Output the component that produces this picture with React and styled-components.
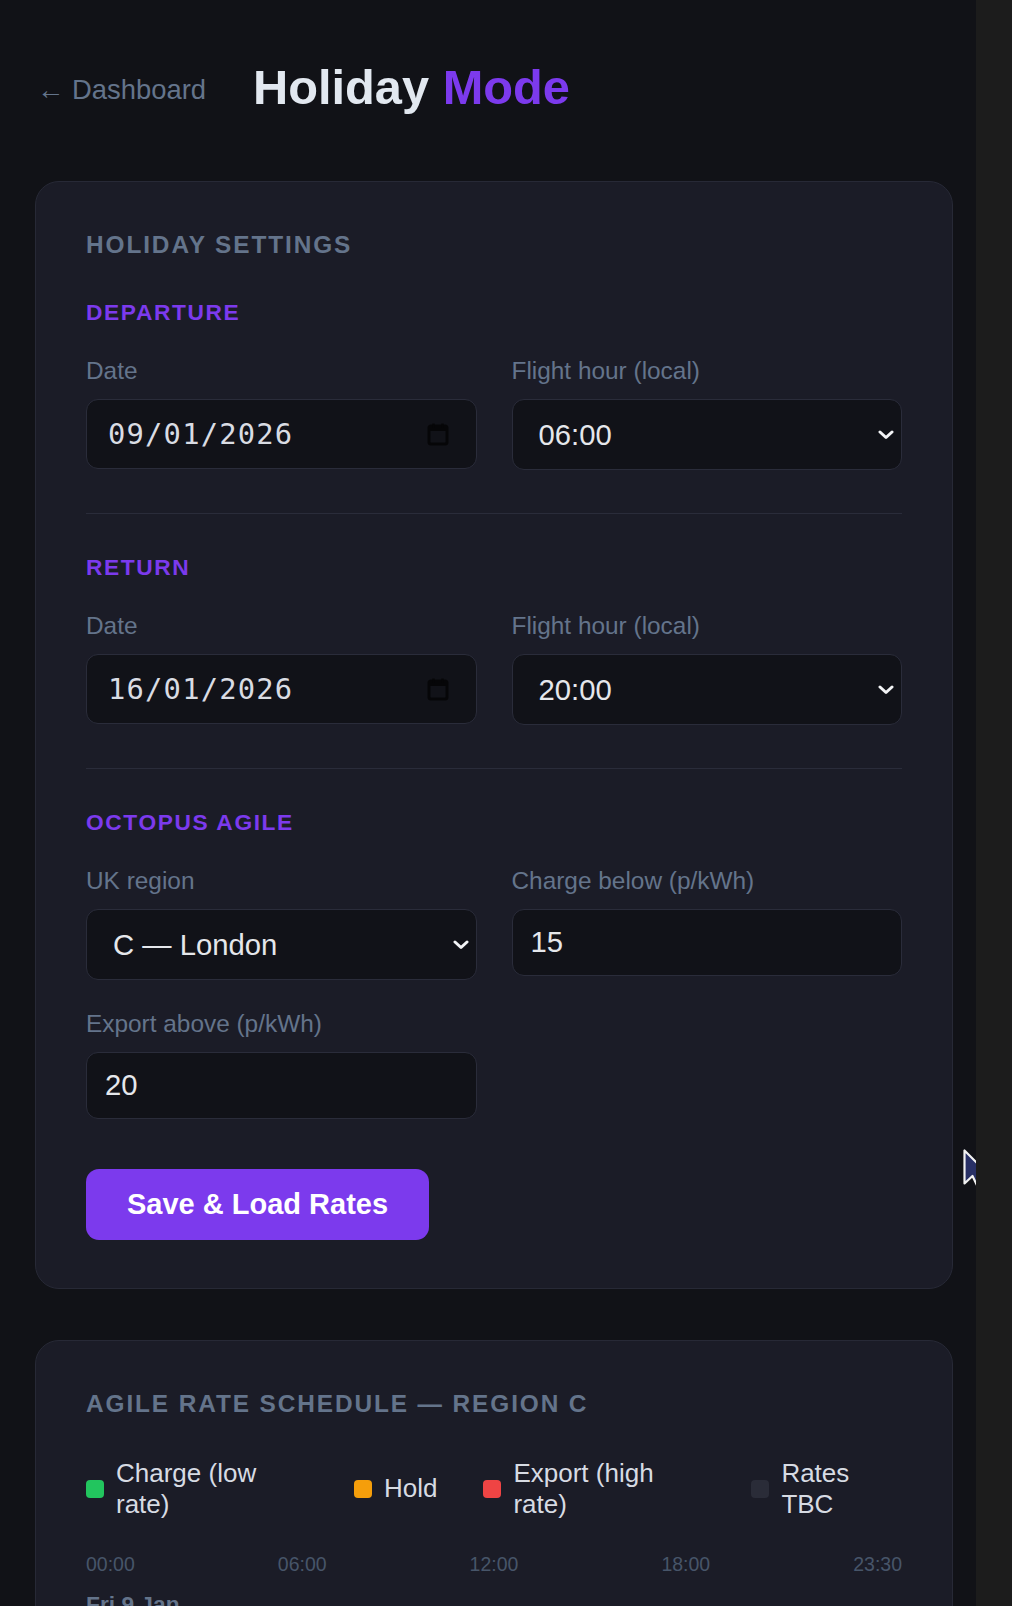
import React from 'react';
import styled, { createGlobalStyle, css } from 'styled-components';

const GlobalStyle = createGlobalStyle`
  html, body {
    margin: 0;
    padding: 0;
    background: #1c1c1c;
  }
  body {
    font-family: "Liberation Sans", Arial, sans-serif;
  }
  * {
    box-sizing: border-box;
  }
`;

const Page = styled.main`
  position: relative;
  width: 976px;
  min-height: 100vh;
  overflow: hidden;
  background: #111217;
  padding: 59px 23px 60px 35px;
`;

const Header = styled.header`
  display: flex;
  align-items: center;
  gap: 47px;
  padding-left: 2px;
  margin-bottom: 66px;
`;

const BackLink = styled.a`
  margin-top: 5px;
  color: #64748b;
  font-size: 27.4px;
  line-height: 32px;
  text-decoration: none;
`;

const Title = styled.h1`
  margin: 0;
  font-size: 48.75px;
  line-height: 56px;
  font-weight: 700;
  color: #e2e8f0;
`;

const Accent = styled.span`
  color: #7c3aed;
`;

const Card = styled.section`
  background: #1b1c27;
  border: 1px solid #272936;
  border-radius: 24px;
  padding: 49px 50px 48px;

  & + & {
    margin-top: 51px;
  }
`;

const CardTitle = styled.h2`
  margin: 0 0 40px;
  font-size: 24.4px;
  line-height: 28px;
  font-weight: 700;
  letter-spacing: 1.9px;
  text-transform: uppercase;
  color: #64748b;
`;

const GroupTitle = styled.h3`
  margin: 0 0 32px;
  font-size: 22.75px;
  line-height: 26px;
  font-weight: 700;
  letter-spacing: 1.6px;
  text-transform: uppercase;
  color: #7c3aed;
`;

const FieldGrid = styled.div`
  display: grid;
  grid-template-columns: minmax(0, 1fr) minmax(0, 1fr);
  column-gap: 35px;
  row-gap: 30px;
`;

const Field = styled.label`
  display: flex;
  flex-direction: column;
  min-width: 0;
`;

const Label = styled.span`
  font-size: 24.4px;
  line-height: 28px;
  color: #64748b;
  margin-bottom: 14px;
`;

const frame = css`
  background: #111218;
  border: 1px solid #2a2c3a;
  border-radius: 12px;
  color: #e5e7eb;
`;

const DateBox = styled.div`
  ${frame};
  display: flex;
  align-items: center;
  height: 70px;
  padding: 0 27px 0 21px;
`;

const DateText = styled.input`
  flex: 1;
  min-width: 0;
  padding: 0;
  border: none;
  outline: none;
  background: transparent;
  color: #d9dce3;
  font-family: "DejaVu Sans Mono", "Liberation Mono", monospace;
  font-size: 28.8px;
  letter-spacing: 1.2px;
`;

const SelectBox = styled.div`
  ${frame};
  display: flex;
  align-items: center;
  height: 71px;
  padding-right: 7px;
`;

const Select = styled.select`
  flex: 1;
  min-width: 0;
  height: 100%;
  appearance: none;
  padding: 0 0 0 26px;
  border: none;
  outline: none;
  background: transparent;
  color: #e5e7eb;
  font-family: "Liberation Sans", Arial, sans-serif;
  font-size: 29.25px;
`;

const NumberInput = styled.input`
  ${frame};
  width: 100%;
  height: 67px;
  padding: 0 18px;
  outline: none;
  font-family: "Liberation Sans", Arial, sans-serif;
  font-size: 29.25px;
`;

const Divider = styled.hr`
  height: 1px;
  margin: 43px 0 40px;
  border: none;
  background: #2a2c3a;
`;

const PrimaryButton = styled.button`
  display: block;
  margin-top: 50px;
  height: 71px;
  padding: 0 41px;
  border: none;
  border-radius: 13px;
  background: #7c3aed;
  color: #ffffff;
  font-family: "Liberation Sans", Arial, sans-serif;
  font-size: 29px;
  font-weight: 700;
  cursor: pointer;
`;

const Legend = styled.div`
  display: flex;
  align-items: center;
  gap: 46px;
  font-size: 26px;
  line-height: 1.18;
  color: #d7dbe3;
`;

const LegendItem = styled.div`
  display: flex;
  align-items: center;
  gap: 12px;
`;

const Swatch = styled.span`
  flex-shrink: 0;
  width: 18px;
  height: 18px;
  border-radius: 4px;
  background: ${(p) => p.$color};
`;

const AxisRow = styled.div`
  display: flex;
  justify-content: space-between;
  margin-top: 34px;
  font-size: 19.5px;
  line-height: 22px;
  color: #475569;
`;

const DayLabel = styled.div`
  margin-top: 16px;
  font-size: 22.75px;
  line-height: 26px;
  font-weight: 700;
  color: #64748b;
`;

const SlotRow = styled.div`
  display: grid;
  grid-template-columns: repeat(48, 1fr);
  gap: 2px;
  margin-top: 10px;
  height: 40px;
`;

const Slot = styled.span`
  border-radius: 3px;
  background: ${(p) => p.$color};
`;

const Pointer = styled.svg`
  position: absolute;
  left: 963px;
  top: 1149px;
  pointer-events: none;
`;

const swatches = {
  charge: '#22c55e',
  hold: '#f59e0b',
  export: '#ef4444',
  tbc: '#2a2c38',
};

const legend = [
  { key: 'charge', text: 'Charge (low rate)' },
  { key: 'hold', text: 'Hold' },
  { key: 'export', text: 'Export (high rate)' },
  { key: 'tbc', text: 'Rates TBC' },
];

const hours = Array.from({ length: 24 }, (_, i) => `${String(i).padStart(2, '0')}:00`);

// native-looking date picker glyph, drawn near black like the stock indicator
const CalendarIcon = () => (
  <svg width="22" height="24" viewBox="0 0 22 24" fill="none">
    <rect x="2" y="4" width="18" height="18" rx="2" stroke="#060608" strokeWidth="3" />
    <rect x="2" y="4" width="18" height="5" fill="#060608" />
    <path d="M6.5 1.5v4M15.5 1.5v4" stroke="#060608" strokeWidth="2.4" />
  </svg>
);

const Chevron = () => (
  <svg width="16" height="10" viewBox="0 0 16 10" fill="none">
    <path d="M2 2l6 5.5L14 2" stroke="#f3f4f6" strokeWidth="3" strokeLinecap="round" strokeLinejoin="round" />
  </svg>
);

const DateField = ({ label, value }) => (
  <Field>
    <Label>{label}</Label>
    <DateBox>
      <DateText type="text" readOnly value={value} />
      <CalendarIcon />
    </DateBox>
  </Field>
);

const SelectField = ({ label, value, options }) => (
  <Field>
    <Label>{label}</Label>
    <SelectBox>
      <Select value={value} onChange={() => {}}>
        {options.map((o) => (
          <option key={o} value={o}>{o}</option>
        ))}
      </Select>
      <Chevron />
    </SelectBox>
  </Field>
);

const NumberField = ({ label, value }) => (
  <Field>
    <Label>{label}</Label>
    <NumberInput type="number" readOnly value={value} />
  </Field>
);

const App = () => (
  <>
    <GlobalStyle />
    <Page>
      <Header>
        <BackLink href="#">← Dashboard</BackLink>
        <Title>
          Holiday <Accent>Mode</Accent>
        </Title>
      </Header>

      <Card>
        <CardTitle>Holiday Settings</CardTitle>

        <GroupTitle>Departure</GroupTitle>
        <FieldGrid>
          <DateField label="Date" value="09/01/2026" />
          <SelectField label="Flight hour (local)" value="06:00" options={hours} />
        </FieldGrid>

        <Divider />

        <GroupTitle>Return</GroupTitle>
        <FieldGrid>
          <DateField label="Date" value="16/01/2026" />
          <SelectField label="Flight hour (local)" value="20:00" options={hours} />
        </FieldGrid>

        <Divider />

        <GroupTitle>Octopus Agile</GroupTitle>
        <FieldGrid>
          <SelectField
            label="UK region"
            value="C — London"
            options={['A — Eastern England', 'B — East Midlands', 'C — London', 'D — Merseyside and N Wales']}
          />
          <NumberField label="Charge below (p/kWh)" value="15" />
          <NumberField label="Export above (p/kWh)" value="20" />
        </FieldGrid>

        <PrimaryButton type="button">Save &amp; Load Rates</PrimaryButton>
      </Card>

      <Card>
        <CardTitle>Agile Rate Schedule — Region C</CardTitle>
        <Legend>
          {legend.map((item) => (
            <LegendItem key={item.key}>
              <Swatch $color={swatches[item.key]} />
              <span>{item.text}</span>
            </LegendItem>
          ))}
        </Legend>
        <AxisRow>
          <span>00:00</span>
          <span>06:00</span>
          <span>12:00</span>
          <span>18:00</span>
          <span>23:30</span>
        </AxisRow>
        <DayLabel>Fri 9 Jan</DayLabel>
        <SlotRow>
          {Array.from({ length: 48 }, (_, i) => (
            <Slot key={i} $color={swatches.tbc} />
          ))}
        </SlotRow>
      </Card>

      <Pointer width="26" height="40" viewBox="0 0 26 40">
        <path d="M1.5 1.5v33l8-7.5 5.5 11.5 5-2.2-5.4-11.3H25z" fill="#283066" stroke="#f2f2f2" strokeWidth="2.2" strokeLinejoin="round" />
      </Pointer>
    </Page>
  </>
);

export default App;
